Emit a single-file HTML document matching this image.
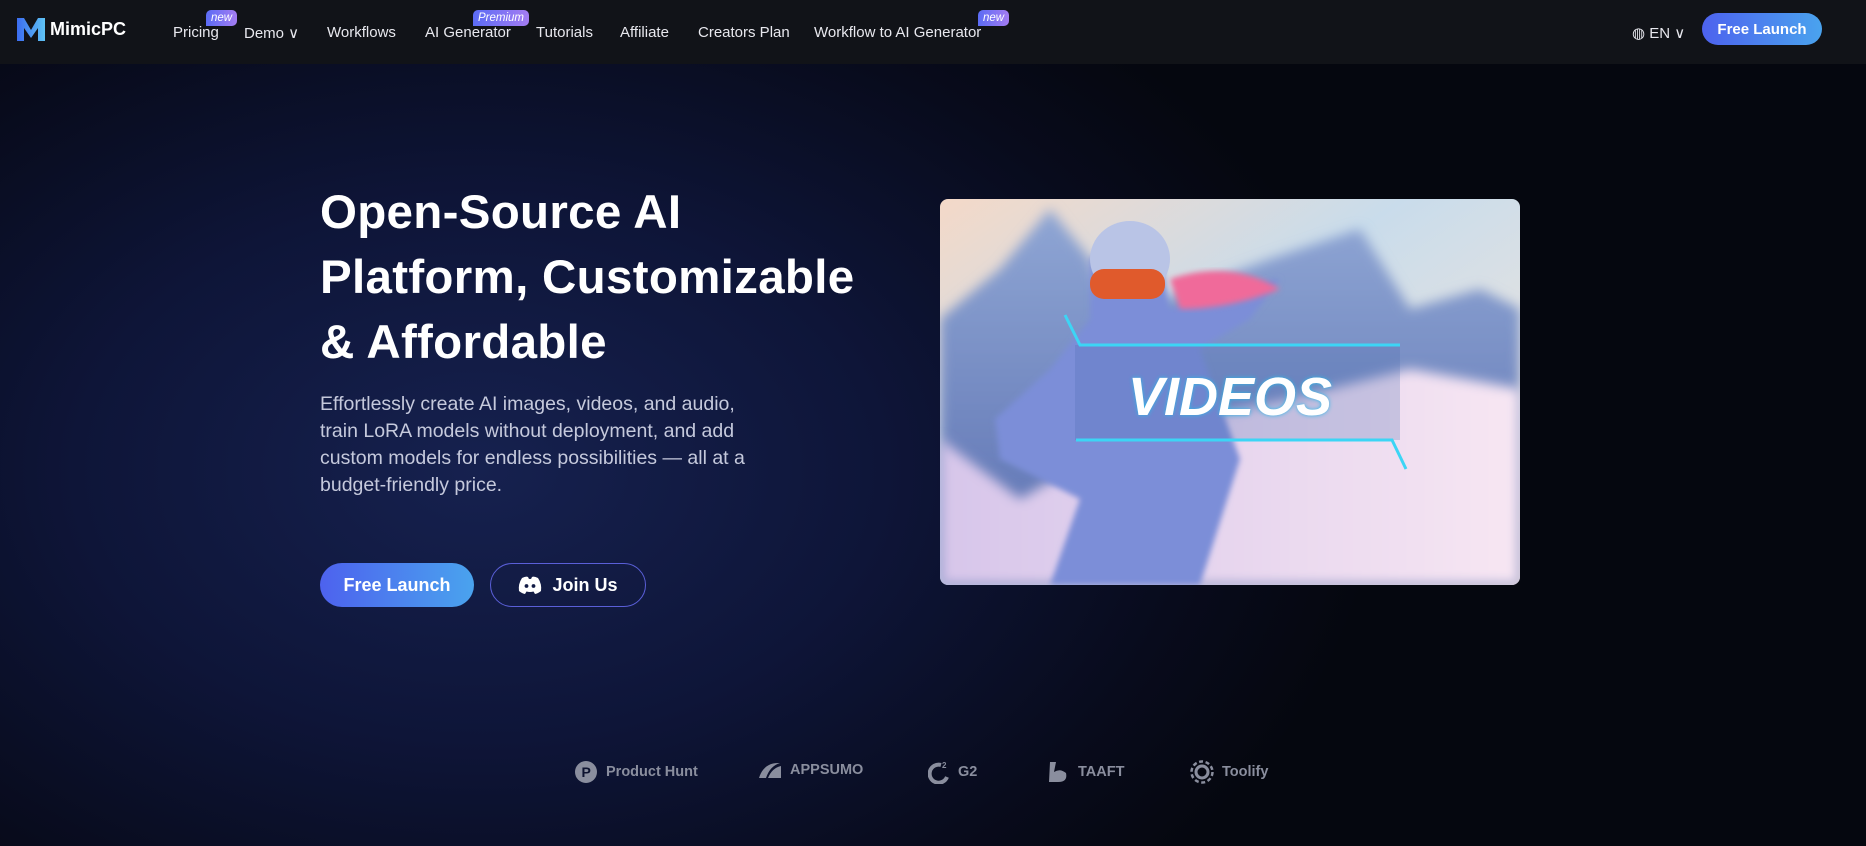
<!DOCTYPE html>
<html><head><meta charset="utf-8"><style>
*{margin:0;padding:0;box-sizing:border-box}
body{width:1866px;height:846px;overflow:hidden;font-family:"Liberation Sans",sans-serif;color:#fff;
background:radial-gradient(ellipse 900px 600px at 480px 470px,#16214f 0%,#0e1538 45%,#080b1c 80%,#05070f 100%);}
.nav{position:absolute;left:0;top:0;width:1866px;height:64px;background:#111318;}
.logo{position:absolute;left:16px;top:16px;display:flex;align-items:center;gap:4px;font-size:18px;font-weight:bold}
.nav a{position:absolute;top:24px;font-size:15px;color:#e8e8ee;white-space:nowrap}
.badge{position:absolute;top:10px;height:16px;padding:0 5px;font-size:11.5px;font-style:italic;color:#fff;border-radius:5px 5px 5px 0;background:linear-gradient(90deg,#5b6cf5,#a47cf2);line-height:16px}
.btn{position:absolute;border-radius:999px;display:flex;align-items:center;justify-content:center;font-weight:bold;color:#fff;background:linear-gradient(90deg,#4d62ee,#4aa3ee)}
h1{position:absolute;left:320px;top:180px;font-size:47.5px;line-height:65px;font-weight:bold;letter-spacing:0.3px}
p.sub{position:absolute;left:320px;top:391px;width:445px;font-size:19.5px;line-height:27px;color:#c5c9dc}
.logos{position:absolute;top:760px;font-size:14.5px;color:#8a8e9e;display:flex;align-items:center;gap:8px;font-weight:bold}
</style></head><body>
<div class="nav">
 <div class="logo"><svg width="30" height="26" viewBox="0 0 30 26"><defs><linearGradient id="lg" x1="0" x2="1"><stop offset="0" stop-color="#3b6cf0"/><stop offset="1" stop-color="#5ec3f5"/></linearGradient></defs><path d="M1 2 L8 2 L15 14 L22 2 L29 2 L29 25 L22 25 L22 12 L15 22 L8 12 L8 25 L1 25Z" fill="url(#lg)"/></svg><span>MimicPC</span></div>
 <a style="left:173px">Pricing</a><span class="badge" style="left:206px">new</span>
 <a style="left:244px">Demo ∨</a>
 <a style="left:327px">Workflows</a>
 <a style="left:425px">AI Generator</a><span class="badge" style="left:473px">Premium</span>
 <a style="left:536px">Tutorials</a>
 <a style="left:620px">Affiliate</a>
 <a style="left:698px">Creators Plan</a>
 <a style="left:814px">Workflow to AI Generator</a><span class="badge" style="left:978px">new</span>
 <a style="left:1632px">◍ EN ∨</a>
 <div class="btn" style="left:1702px;top:13px;width:120px;height:32px;font-size:15px">Free Launch</div>
</div>
<h1>Open-Source AI<br>Platform, Customizable<br>&amp; Affordable</h1>
<p class="sub">Effortlessly create AI images, videos, and audio, train LoRA models without deployment, and add custom models for endless possibilities — all at a budget-friendly price.</p>
<div class="btn" style="left:320px;top:563px;width:154px;height:44px;font-size:18px">Free Launch</div>
<div class="btn" style="left:490px;top:563px;width:156px;height:44px;font-size:18px;background:transparent;border:1.5px solid #5a5fd8;gap:10px"><svg width="24" height="18" viewBox="0 0 24 18"><path d="M4 2 Q8 0 10 1 L11 3 Q12 2.8 13 3 L14 1 Q16 0 20 2 Q24 8 23 15 Q20 17.5 17 18 L15.5 15.5 Q12 16.5 8.5 15.5 L7 18 Q4 17.5 1 15 Q0 8 4 2Z" fill="#fff"/><circle cx="8.5" cy="10" r="1.9" fill="#101a45"/><circle cx="15.5" cy="10" r="1.9" fill="#101a45"/></svg>Join Us</div>
<svg style="position:absolute;left:940px;top:199px;border-radius:8px" width="580" height="386" viewBox="0 0 580 386">
<defs>
<linearGradient id="sky" x1="0" y1="0" x2="1" y2="1"><stop offset="0" stop-color="#f4d9c8"/><stop offset="0.4" stop-color="#c9dceb"/><stop offset="1" stop-color="#fbe7d8"/></linearGradient>
<linearGradient id="mt" x1="0" y1="0" x2="0" y2="1"><stop offset="0" stop-color="#8fa6d4"/><stop offset="1" stop-color="#5a6fb0"/></linearGradient>
<linearGradient id="snow" x1="0" y1="0" x2="1" y2="0"><stop offset="0" stop-color="#d7c6ea"/><stop offset="1" stop-color="#f7e6f3"/></linearGradient>
<filter id="bl"><feGaussianBlur stdDeviation="6"/></filter>
<filter id="gl"><feGaussianBlur stdDeviation="3"/></filter>
<filter id="tg"><feGaussianBlur stdDeviation="2"/></filter>
</defs>
<rect width="580" height="386" fill="url(#sky)"/>
<path d="M0 120 L60 70 L110 10 L150 60 L170 120 L250 90 L330 60 L420 30 L470 110 L540 90 L580 110 L580 386 L0 386Z" fill="url(#mt)" filter="url(#bl)"/>
<path d="M0 240 L80 300 L200 230 L350 200 L470 170 L580 190 L580 386 L0 386Z" fill="url(#snow)" filter="url(#bl)"/>
<path d="M150 60 Q190 20 220 55 L230 110 Q300 85 340 80 L310 120 L260 150 L300 260 L260 386 L110 386 L140 300 L60 260 L55 220 L110 170 L150 120Z" fill="#7c8ed8" filter="url(#gl)"/>
<ellipse cx="190" cy="60" rx="40" ry="38" fill="#b9c4e6"/>
<rect x="150" y="70" width="75" height="30" rx="14" fill="#e05a2c"/>
<path d="M230 80 Q290 60 340 90 Q290 110 240 110Z" fill="#f06a9a" filter="url(#gl)"/>
<rect x="135" y="146" width="325" height="95" fill="#4a6ab0" opacity="0.25"/>
<path d="M125 116 L140 146 L460 146" stroke="#3cd5f5" stroke-width="3" fill="none"/>
<path d="M136 241 L452 241 L466 270" stroke="#3cd5f5" stroke-width="3" fill="none"/>
<text x="290" y="216" text-anchor="middle" font-family="Liberation Sans" font-weight="bold" font-style="italic" font-size="54" fill="#2ab8e8" filter="url(#tg)">VIDEOS</text>
<text x="290" y="216" text-anchor="middle" font-family="Liberation Sans" font-weight="bold" font-style="italic" font-size="54" fill="#fff">VIDEOS</text>
</svg>
<div class="logos" style="left:574px"><svg width="24" height="24"><circle cx="12" cy="12" r="11" fill="#8a8e9e"/><text x="7.5" y="17" font-size="14" font-weight="bold" fill="#0d1330" font-family="Liberation Sans">P</text></svg>Product Hunt</div>
<div class="logos" style="left:758px"><svg width="24" height="20"><path d="M1 18 Q6 2 22 3 Q12 6 8 18Z M10 18 Q14 8 23 6 L23 18Z" fill="#8a8e9e"/></svg>APPSUMO</div>
<div class="logos" style="left:928px"><svg width="22" height="24"><path d="M13 5 A9 9 0 1 0 19 17" stroke="#8a8e9e" stroke-width="4" fill="none"/><text x="14" y="8" font-size="8" fill="#8a8e9e">2</text></svg>G2</div>
<div class="logos" style="left:1046px"><svg width="24" height="24"><path d="M4 2 L10 2 L8 12 Q14 8 20 13 Q22 22 12 22 L3 22 Z" fill="#8a8e9e"/></svg>TAAFT</div>
<div class="logos" style="left:1190px"><svg width="24" height="24"><circle cx="12" cy="12" r="6" stroke="#8a8e9e" stroke-width="3" fill="none"/><circle cx="12" cy="12" r="10.5" stroke="#8a8e9e" stroke-width="2.5" stroke-dasharray="4 2.6" fill="none"/></svg>Toolify</div>
</body></html>
